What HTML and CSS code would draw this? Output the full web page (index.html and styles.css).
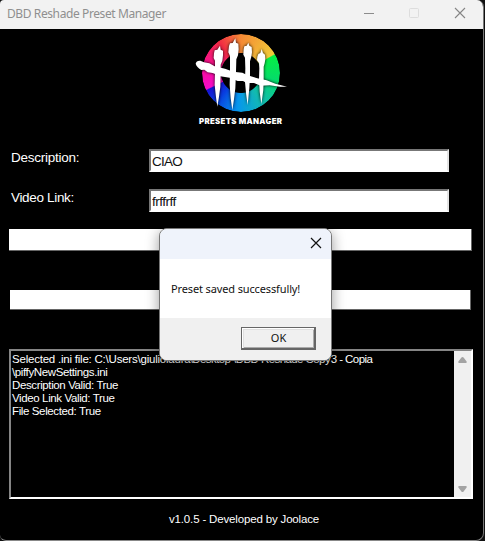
FILE: index.html
```html
<!DOCTYPE html>
<html lang="en">
<head>
<meta charset="utf-8">
<title>DBD Reshade Preset Manager</title>
<link rel="stylesheet" href="styles.css">
</head>
<body>
<main class="window">
  <header class="titlebar">
    <span class="title">DBD Reshade Preset Manager</span>
    <svg class="controls" width="110" height="28" viewBox="0 0 110 28" fill="none">
      <path d="M0 13.5h10" stroke="#8c8c8c"/>
      <rect x="45.500" y="8.500" width="9" height="9" rx="1" stroke="#dddddd"/>
      <path d="M91 8l10 10M101 8l-10 10" stroke="#858585" stroke-width="1.100"/>
    </svg>
  </header>
  <section class="content">
    <div class="logo">
      <div class="wheel"></div>
      <svg class="strokes" width="100" height="100" viewBox="0 0 300 300" fill="#fff">
        <path d="M72 70L74 61L82 59L90 47L92 59L99 62L99 76L97 92L92 104L92 130L91 170L87 200L82 230L78 202L74 165L75 125L75 92L71 84Z"/>
        <path d="M117 48L120 40L128 39L136 25L138 38L145 41L146 58L144 76L139 88L138 125L136 175L132 208L127 240L122 205L119 165L120 120L120 78L115 67Z"/>
        <path d="M161 58L163 49L170 47L175 38L178 47L185 51L186 67L184 80L180 94L180 135L178 175L173 225L168 190L165 155L166 115L165 83L160 74Z"/>
        <path d="M202 80L205 72L211 69L215 57L219 69L225 74L226 88L224 100L221 110L221 145L220 180L214 222L209 185L207 150L208 115L207 99L201 91Z"/>
        <path d="M17 101Q19 91 31 92L42 97L58 100L74 109L105 116L130 125L157 128L173 136L202 145L230 151L256 161L291 170L270 170L239 166L212 167L192 159L170 159L159 153L143 153L119 143L91 139L68 129L53 127L43 119L34 120Q21 113 17 101Z"/>
      </svg>
      <div class="brand">PRESETS MANAGER</div>
    </div>
    <div class="field"><label for="description">Description:</label><input id="description" value="CIAO"></div>
    <div class="field link"><label for="video">Video Link:</label><input id="video" value="frffrff"></div>
    <div class="bar"></div>
    <div class="bar second"></div>
    <div class="log">
      <div class="log-text"><div class="path"><span class="path-a">Selected .ini file: C:\Users\giuliolaura</span><span class="path-b"> \Desktop \DBD Reshade Copy</span><span class="path-c"> 3 - Copia</span></div><div>\piffyNewSettings.ini</div><div>Description Valid: True</div><div>Video Link Valid: True</div><div>File Selected: True</div></div>
      <div class="scrollbar">
        <svg width="9" height="6" viewBox="0 0 10 7"><path d="M1 7Q0 7 0 5.500L3.500 1Q5-1 6.500 1L10 5.500Q10 7 9 7z"/></svg>
        <svg class="down" width="9" height="6" viewBox="0 0 10 7"><path d="M1 7Q0 7 0 5.500L3.500 1Q5-1 6.500 1L10 5.500Q10 7 9 7z"/></svg>
      </div>
    </div>
    <footer class="version">v1.0.5 - Developed by Joolace</footer>
  </section>
</main>
<div class="dialog" role="dialog">
  <div class="dialog-head"><svg width="12" height="12" viewBox="0 0 12 12"><path d="M1 1l10 10M11 1L1 11" stroke="#111" stroke-width="1.200"/></svg></div>
  <div class="dialog-body">Preset saved successfully!</div>
  <div class="dialog-foot"><button>OK</button></div>
</div>
</body>
</html>
```

FILE: styles.css
```css
* { box-sizing: border-box; }
body { margin: 0; width: 485px; height: 541px; overflow: hidden; background: #111; font-family: "Liberation Sans", Arial, sans-serif; }
.window { width: 484px; height: 541px; background: #000; border-right: 1px solid #777; border-bottom: 1px solid #888; border-radius: 4px 7px 8px 6px; overflow: hidden; }
.titlebar { height: 29px; background: #f2f2f2; display: flex; justify-content: space-between; padding-left: 7px; }
.title { font: 12px/28px "Noto Sans", sans-serif; color: #8f8f8f; letter-spacing: -0.4px; white-space: nowrap; }
.controls { margin-right: 9px; }
.content { display: flex; flex-direction: column; height: 511px; }
.logo { position: relative; height: 120px; }
.wheel { position: absolute; left: 202px; top: 5px; width: 78px; height: 78px; border-radius: 50%; background: conic-gradient(#f58a35 0deg, #f1cb38 60deg, #06ef45 62deg, #05dc68 100deg, #12b9b2 145deg, #0797ec 185deg, #083fe0 220deg, #1712d2 243deg, #f50bc8 245deg, #fa0e91 285deg, #f12c43 325deg, #f58a35 360deg); mask: radial-gradient(circle, transparent 19.500px, #000 20.500px); }
.strokes { position: absolute; left: 190px; top: 1px; filter: drop-shadow(0 0 1.500px #000); }
.brand { position: absolute; left: 199px; top: 86px; font: 900 7.800px/12px Inter, sans-serif; color: #fff; white-space: nowrap; letter-spacing: 0.32px; }
.field { display: flex; height: 23px; padding-left: 11px; flex: none; }
.field label { width: 138px; font-size: 13.5px; line-height: 17px; color: #fff; letter-spacing: -0.25px; }
.field input { width: 300px; height: 23px; border: 2px solid; border-color: #777 #e4e4e4 #fff #777; border-radius: 0; padding: 1px 1px 0; background: #fff; font: 13.5px/18px "Liberation Sans", sans-serif; color: #111; letter-spacing: -0.75px; outline: 0; }
.field.link { margin-top: 17px; }
.link label { letter-spacing: -0.33px; }
.link input { letter-spacing: -0.5px; }
.bar { margin: 17px 0 0 9px; width: 463px; height: 22px; flex: none; background: #fff; border: solid #666; border-width: 0 1px 1px 0; }
.bar.second { margin: 39px 0 0 10px; width: 461px; height: 20px; }
.log { flex: none; margin: 39px 0 0 9px; width: 464px; height: 150px; border: 2px solid; border-color: #858585 #fff #fff #858585; display: flex; justify-content: space-between; }
.log-text { padding: 2px 0 0 1px; font-size: 11.5px; line-height: 13px; color: #fff; white-space: pre; width: 442px; letter-spacing: -0.38px; }
.path { display: flex; letter-spacing: -0.22px; }
.path-a { width: 175px; }
.path-b { width: 141px; letter-spacing: -0.57px; }
.path-c { letter-spacing: -0.55px; }
.scrollbar { width: 17px; background: #f0f0f0; display: flex; flex-direction: column; justify-content: space-between; align-items: center; padding: 6px 0 5px; fill: #a3a3a3; }
.down { transform: rotate(180deg); }
.version { margin: 13px 0 0 169px; font-size: 11.5px; line-height: 14px; color: #fff; letter-spacing: -0.16px; white-space: nowrap; }
.dialog { position: absolute; left: 159px; top: 228px; width: 173px; height: 133px; border: 1px solid #777; border-radius: 8px; background: #fff; overflow: hidden; box-shadow: 0 3px 14px #0006; }
.dialog-head { height: 30px; background: #eff3fb; display: flex; justify-content: flex-end; padding: 8px 9px 0; }
.dialog-body { height: 59px; padding: 21px 0 0 11px; font: 11px/17px "Noto Sans", sans-serif; color: #111; white-space: nowrap; letter-spacing: -0.13px; }
.dialog-foot { height: 42px; background: #f0f0f0; padding: 9px 15px 0 0; display: flex; justify-content: flex-end; }
.dialog button { width: 75px; height: 23px; padding: 0 0 0 1px; border: solid #666; border-width: 1px 2px 2px 1px; border-radius: 0; background: #f0f0f0; box-shadow: inset 1px 1px #fff, inset 2px 2px #e0e0e0, inset -1px -1px #aaa; font: 11px/18px "Noto Sans", sans-serif; color: #111; }
```
